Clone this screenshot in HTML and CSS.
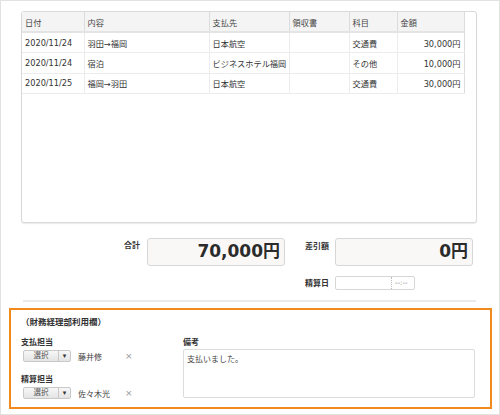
FILE: index.html
```html
<!DOCTYPE html>
<html lang="ja">
<head>
<meta charset="utf-8">
<link rel="stylesheet" href="styles.css">
</head>
<body>
<div class="page">
  <div class="panel">
    <table class="list">
      <colgroup>
        <col class="c1"><col class="c2"><col class="c3"><col class="c4"><col class="c5"><col class="c6">
      </colgroup>
      <thead>
        <tr><th>日付</th><th>内容</th><th>支払先</th><th>領収書</th><th>科目</th><th>金額</th></tr>
      </thead>
      <tbody>
        <tr><td>2020/11/24</td><td>羽田→福岡</td><td>日本航空</td><td></td><td>交通費</td><td class="num">30,000円</td></tr>
        <tr><td>2020/11/24</td><td>宿泊</td><td>ビジネスホテル福岡</td><td></td><td>その他</td><td class="num">10,000円</td></tr>
        <tr><td>2020/11/25</td><td>福岡→羽田</td><td>日本航空</td><td></td><td>交通費</td><td class="num">30,000円</td></tr>
      </tbody>
    </table>
  </div>

  <div class="totals">
    <div class="tlabel tl-sum">合計</div>
    <div class="tbox">70,000円</div>
    <div class="tlabel tl-right">差引額</div>
    <div class="tbox">0円</div>
    <div></div>
    <div></div>
    <div class="tlabel tl-right tl-date">精算日</div>
    <div class="date"><span class="date-field"></span><span class="date-time">--:--</span></div>
  </div>

  <div class="sep"></div>

  <div class="finance">
    <div class="ftitle">（財務経理部利用欄）</div>
    <div class="fbody">
      <div class="people">
        <div class="plabel">支払担当</div>
        <div class="prow">
          <span class="sel"><span class="sel-text">選択</span><span class="sel-arrow">▾</span></span>
          <span class="pname">藤井修</span>
          <span class="clear">×</span>
        </div>
        <div class="plabel pl2">精算担当</div>
        <div class="prow">
          <span class="sel"><span class="sel-text">選択</span><span class="sel-arrow">▾</span></span>
          <span class="pname">佐々木光</span>
          <span class="clear">×</span>
        </div>
      </div>
      <div class="memo">
        <div class="plabel">備考</div>
        <div class="memo-box">支払いました。</div>
      </div>
    </div>
  </div>
</div>
</body>
</html>
```

FILE: styles.css
```css
* { box-sizing: border-box; }
html, body { margin: 0; padding: 0; background: #fff; }
body {
  font-family: "DejaVu Sans", "Noto Sans CJK JP", sans-serif;
  color: #333;
  font-size: 8.5px;
}
.page {
  width: 500px;
  height: 415px;
  border: 1px solid #e2e2e2;
  padding: 10px 22px 0 20px;
  overflow: hidden;
}
.panel {
  width: 456px;
  height: 212px;
  border: 1px solid #d9d9d9;
  border-radius: 3px;
  box-shadow: 0 1px 1px rgba(0,0,0,0.08);
  background: #fff;
}
.list {
  width: 442px;
  border-collapse: collapse;
  table-layout: fixed;
  font-size: 8.2px;
}
.c1 { width: 62px; }
.c2 { width: 125px; }
.c3 { width: 80px; }
.c4 { width: 60px; }
.c5 { width: 48px; }
.c6 { width: 67px; }
.list th {
  height: 20px;
  background: #f4f4f4;
  font-weight: normal;
  text-align: left;
  padding: 0 3px;
  border-right: 1px solid #dcdcdc;
  border-bottom: 2px solid #e4e4e4;
  color: #444;
}
.list td {
  height: 20.5px;
  padding: 0 2px 0 3px;
  border-right: 1px solid #ececec;
  border-bottom: 1px solid #ececec;
  white-space: nowrap;
  overflow: hidden;
}
.list tr > *:last-child { border-right: 1px solid #dcdcdc; }
.list td.num { text-align: right; padding-right: 3px; }

.totals {
  display: grid;
  grid-template-columns: 126px 138px 50px 138px;
  margin-top: 15px;
  row-gap: 10px;
}
.tlabel {
  font-weight: bold;
  font-size: 8px;
  color: #333;
}
.tl-sum { text-align: right; padding-right: 7px; padding-top: 1px; }
.tl-right { padding-left: 20px; padding-top: 2px; }
.tl-date { padding-top: 1px; }
.tbox {
  height: 28px;
  border: 1px solid #d6d6d6;
  border-radius: 3px;
  background: #faf8f7;
  font-weight: bold;
  font-size: 17px;
  line-height: 20px;
  text-align: right;
  padding: 2px 4px 0 0;
  color: #2b2b2b;
}
.date {
  display: flex;
  width: 80px;
  height: 14px;
  border: 1px solid #d6d6d6;
  border-radius: 2px;
}
.date-field { width: 56px; border-right: 1px dotted #bbb; }
.date-time { font-size: 7px; color: #777; padding-left: 3px; line-height: 12px; }

.sep {
  width: 453px;
  height: 2px;
  background: #eaeaea;
  margin: 10px 0 0 2px;
}
.finance {
  margin: 6px 0 0 -12px;
  width: 483px;
  height: 101px;
  border: 2px solid #f08a1c;
  padding: 5px 15px 0 10px;
}
.ftitle {
  font-weight: bold;
  font-size: 8.5px;
  color: #333;
}
.fbody {
  display: flex;
  margin-top: 11px;
}
.people { width: 162px; }
.plabel {
  font-weight: bold;
  font-size: 8px;
  color: #333;
  height: 10px;
  line-height: 10px;
}
.pl2 { margin-top: 12px; }
.prow {
  display: flex;
  align-items: center;
  height: 14px;
  margin-top: 1px;
}
.sel {
  display: inline-flex;
  flex-shrink: 0;
  width: 48px;
  height: 12px;
  margin-left: 2px;
  border: 1px solid #c8c8c8;
  border-radius: 2px;
  background: linear-gradient(#f7f7f7, #e4e4e4);
  font-size: 7.5px;
  color: #555;
}
.sel-text { width: 35px; text-align: center; line-height: 10px; border-right: 1px solid #c8c8c8; }
.sel-arrow { flex: 1; text-align: center; font-size: 7px; line-height: 10px; color: #333; }
.pname { margin-left: 7px; width: 47px; flex-shrink: 0; font-size: 8px; color: #444; white-space: nowrap; }
.clear { color: #999; font-size: 9px; }
.memo { flex: 1; }
.memo-box {
  margin-top: 1px;
  height: 49px;
  border: 1px solid #dcdcdc;
  border-radius: 2px;
  padding: 3px 3px;
  font-size: 8px;
  color: #444;
}
```
